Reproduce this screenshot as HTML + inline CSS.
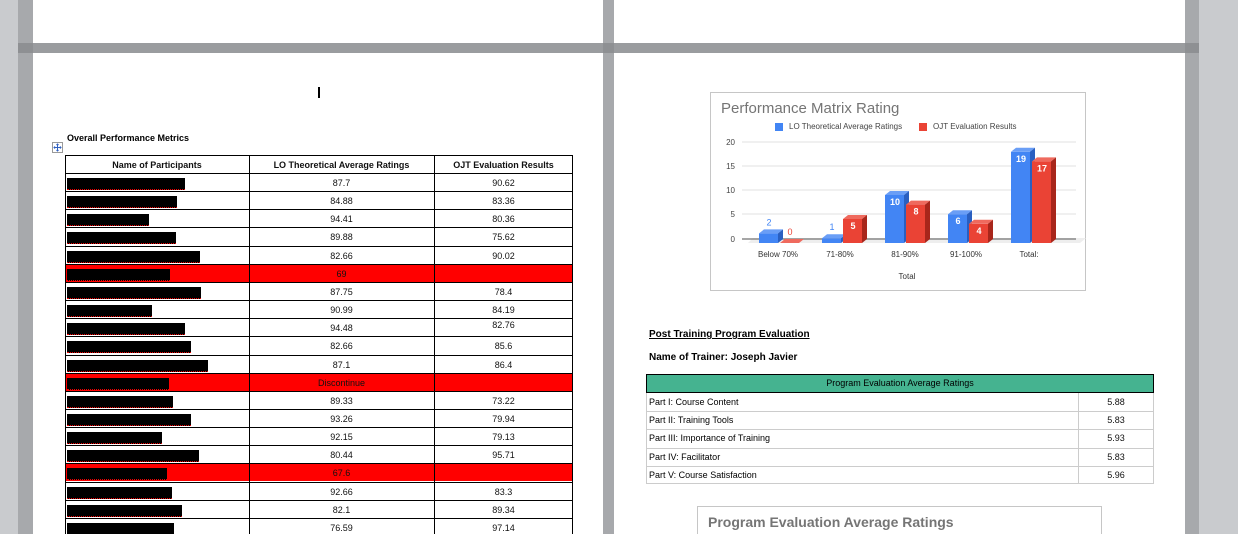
<!DOCTYPE html><html><head><meta charset="utf-8"><style>
*{margin:0;padding:0;box-sizing:border-box}
html,body{width:1238px;height:534px;overflow:hidden}
body{background:#c9cbce;position:relative;font-family:"Liberation Sans",Arial,sans-serif}
.a{position:absolute}
.pg{background:#fff}
.c{position:absolute;text-align:center;font-size:9px;color:#111}
.bar{background:#000;height:12px}
</style></head><body>
<div class="a" style="left:18px;top:0;width:15px;height:534px;background:#a7a9ac"></div>
<div class="a pg" style="left:33px;top:0;width:570px;height:43px"></div>
<div class="a pg" style="left:33px;top:53px;width:570px;height:481px"></div>
<div class="a" style="left:603px;top:0;width:11px;height:534px;background:#a7a9ac"></div>
<div class="a pg" style="left:614px;top:0;width:571px;height:43px"></div>
<div class="a pg" style="left:614px;top:53px;width:571px;height:481px"></div>
<div class="a" style="left:1185px;top:0;width:14px;height:534px;background:#a7a9ac"></div>
<div class="a" style="left:18px;top:43px;width:1181px;height:10px;background:#9a9c9f"></div>
<div class="a" style="left:18px;top:43px;width:15px;height:10px;background:#8e9093"></div>
<div class="a" style="left:603px;top:43px;width:11px;height:10px;background:#8e9093"></div>
<div class="a" style="left:1185px;top:43px;width:14px;height:10px;background:#8e9093"></div>

<div class="a" style="left:318px;top:87px;width:2px;height:11px;background:#000"></div>
<div class="a" style="left:67px;top:133px;font-size:9px;font-weight:bold">Overall Performance Metrics</div>
<svg class="a" style="left:52px;top:142px" width="11" height="11"><rect x=".5" y=".5" width="10" height="10" fill="#fff" stroke="#999"/><path d="M5.5 2v7M2 5.5h7M4.5 3l1-1 1 1M4.5 8l1 1 1-1M3 4.5l-1 1 1 1M8 4.5l1 1-1 1" stroke="#3060c0" fill="none"/></svg>

<div id="t1" class="a" style="left:0;top:0"></div>

<div class="a" style="left:710px;top:92px;width:376px;height:199px;border:1px solid #c6c6c6;background:#fff"></div>
<div class="a" style="left:721px;top:100px;font-size:15px;color:#757575">Performance Matrix Rating</div>
<div class="a" style="left:775px;top:123px;width:8px;height:8px;background:#4285f4"></div>
<div class="a" style="left:789px;top:122px;font-size:8px;color:#444">LO Theoretical Average Ratings</div>
<div class="a" style="left:919px;top:123px;width:8px;height:8px;background:#ea4335"></div>
<div class="a" style="left:933px;top:122px;font-size:8px;color:#444">OJT Evaluation Results</div>
<svg class="a" style="left:710px;top:92px" width="376" height="199" font-family="Liberation Sans,Arial,sans-serif">
<g font-size="8" fill="#444" text-anchor="end"><text x="25" y="53">20</text><text x="25" y="77">15</text><text x="25" y="101">10</text><text x="25" y="125">5</text><text x="25" y="150">0</text></g>
<g stroke="#e0e0e0"><line x1="32" x2="366" y1="50" y2="50"/><line x1="32" x2="366" y1="74" y2="74"/><line x1="32" x2="366" y1="98" y2="98"/><line x1="32" x2="366" y1="122" y2="122"/></g>
<path d="M38 151L43 146H376L370 151Z" fill="#eee"/>
<line x1="32" x2="366" y1="147" y2="147" stroke="#888" stroke-width="1.5"/>
<g id="bars"></g>
<g font-size="8" fill="#333" text-anchor="middle"><text x="68" y="165">Below 70%</text><text x="130" y="165">71-80%</text><text x="195" y="165">81-90%</text><text x="256" y="165">91-100%</text><text x="319" y="165">Total:</text><text x="197" y="187">Total</text></g>
</svg>

<div class="a" style="left:649px;top:329px;font-size:10px;font-weight:bold;text-decoration:underline">Post Training Program Evaluation</div>
<div class="a" style="left:649px;top:352px;font-size:10px;font-weight:bold">Name of Trainer: Joseph Javier</div>
<div class="a" style="left:646px;top:374px;width:508px;height:19px;background:#45b390;border:1px solid #000;font-size:9px;text-align:center;line-height:17px">Program Evaluation Average Ratings</div>
<div id="t2"></div>

<div class="a" style="left:697px;top:506px;width:405px;height:28px;border:1px solid #c6c6c6;border-bottom:none;background:#fff"></div>
<div class="a" style="left:708px;top:514px;font-size:14px;font-weight:bold;color:#757575">Program Evaluation Average Ratings</div>

<script>
var rows=[["87.7","90.62",185],["84.88","83.36",177],["94.41","80.36",149],["89.88","75.62",176],["82.66","90.02",200],["69","",170,1],["87.75","78.4",201],["90.99","84.19",152],["94.48","82.76",185],["82.66","85.6",191],["87.1","86.4",208],["Discontinue","",169,1],["89.33","73.22",173],["93.26","79.94",191],["92.15","79.13",162],["80.44","95.71",199],["67.6","",167,1],["92.66","83.3",172],["82.1","89.34",182],["76.59","97.14",174]];
var h='';
h+='<div class="a" style="left:65px;top:155px;width:508px;height:379px;border:1px solid #000;border-bottom:none"></div>';
h+='<div class="c" style="left:65px;top:160px;width:184px;font-weight:bold">Name of Participants</div><div class="c" style="left:249px;top:160px;width:185px;font-weight:bold">LO Theoretical Average Ratings</div><div class="c" style="left:434px;top:160px;width:139px;font-weight:bold">OJT Evaluation Results</div>';
h+='<div class="a" style="left:65px;top:173px;width:508px;height:1px;background:#000"></div>';
rows.forEach(function(r,i){var y=173+i*18.15;
if(r[3])h+='<div class="a" style="left:66px;top:'+(y+1)+'px;width:506px;height:17px;background:#f00"></div>';
if(i<19)h+='<div class="a" style="left:65px;top:'+(y+18.15)+'px;width:508px;height:1px;background:#000"></div>';
h+='<div class="a bar" style="left:67px;top:'+(y+5)+'px;width:'+(r[2]-67)+'px"></div>';
h+='<div class="a" style="left:67px;top:'+(y+16)+'px;width:'+(r[2]-67)+'px;height:1px;border-top:1px dotted #e00"></div>';
var dy=(i==8)?-3:0;
h+='<div class="c" style="left:249px;top:'+(y+5)+'px;width:185px">'+r[0]+'</div><div class="c" style="left:434px;top:'+(y+5+dy)+'px;width:139px">'+r[1]+'</div>';});
h+='<div class="a" style="left:249px;top:155px;width:1px;height:379px;background:#000"></div><div class="a" style="left:434px;top:155px;width:1px;height:379px;background:#000"></div>';
document.getElementById('t1').innerHTML=h;
var p=[["Part I: Course Content","5.88"],["Part II: Training Tools","5.83"],["Part III: Importance of Training","5.93"],["Part IV: Facilitator","5.83"],["Part V: Course Satisfaction","5.96"]];
var g='<div class="a" style="left:646px;top:393px;width:508px;height:91px;border:1px solid #ccc;border-top:none"></div><div class="a" style="left:1078px;top:393px;width:1px;height:91px;background:#ccc"></div>';
p.forEach(function(r,i){var y=393+i*18.2;if(i<4)g+='<div class="a" style="left:646px;top:'+(y+18.2)+'px;width:508px;height:1px;background:#ccc"></div>';g+='<div class="a" style="left:649px;top:'+(y+4)+'px;font-size:9px">'+r[0]+'</div><div class="c" style="left:1078px;top:'+(y+4)+'px;width:76px">'+r[1]+'</div>';});
document.getElementById('t2').innerHTML=g;
var cx=[49,112,175,238,301],B=[2,1,10,6,19],R=[0,5,8,4,17],s='';
function bar(x,v,f,top,side,out){var b=151,ht=v*4.8,y=b-ht;
if(v==0){s+='<path d="M'+x+' '+b+'L'+(x+5)+' '+(b-4)+'H'+(x+24)+'L'+(x+19)+' '+b+'Z" fill="'+top+'"/>';}
else{s+='<rect x="'+x+'" y="'+y+'" width="19" height="'+ht+'" fill="'+f+'"/><path d="M'+x+' '+y+'L'+(x+5)+' '+(y-4)+'H'+(x+24)+'L'+(x+19)+' '+y+'Z" fill="'+top+'"/><path d="M'+(x+19)+' '+y+'L'+(x+24)+' '+(y-4)+'V'+(b-4)+'L'+(x+19)+' '+b+'Z" fill="'+side+'"/>';}
if(out)s+='<text x="'+(x+10)+'" y="'+(y-8)+'" font-size="9" fill="'+f+'" text-anchor="middle">'+v+'</text>';
else s+='<text x="'+(x+10)+'" y="'+(y+10)+'" font-size="9" font-weight="bold" fill="#fff" text-anchor="middle">'+v+'</text>';}
for(var i=0;i<5;i++){bar(cx[i],B[i],'#4285f4','#6a9ef6','#2a5fc0',B[i]<3);bar(cx[i]+21,R[i],'#ea4335','#ef6a5e','#a8261b',R[i]<3);}
document.getElementById('bars').innerHTML=s;
</script>
</body></html>
